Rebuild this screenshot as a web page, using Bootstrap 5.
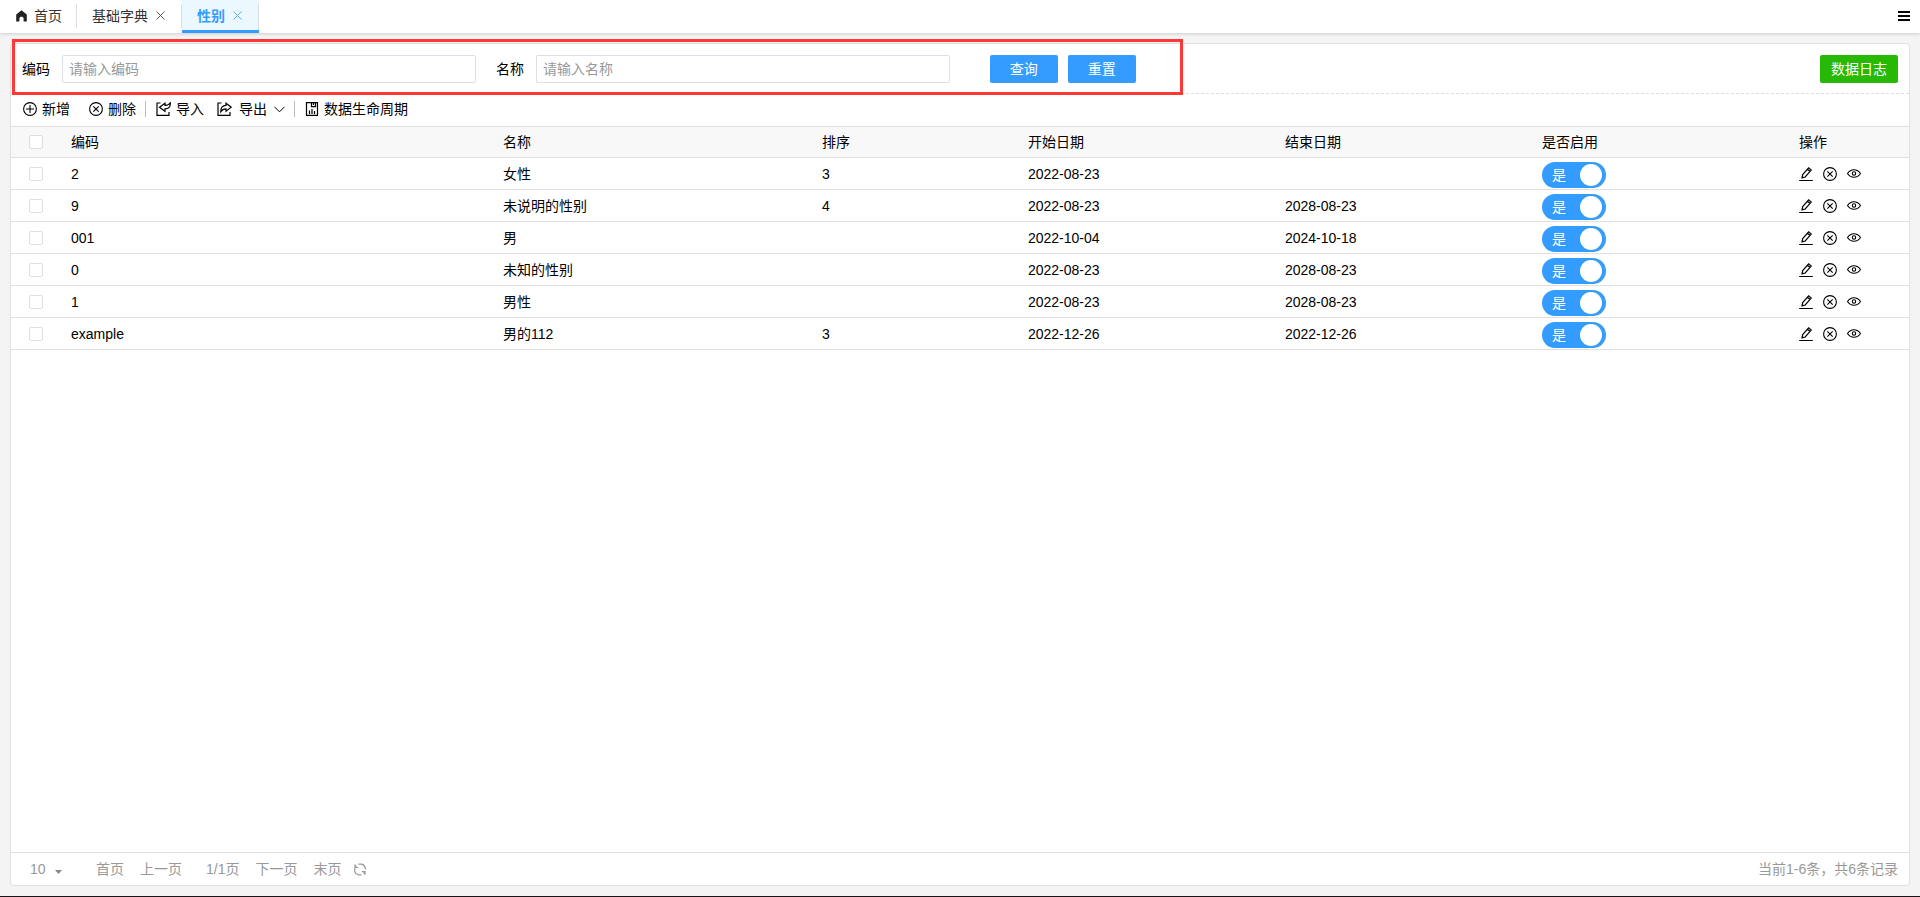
<!DOCTYPE html>
<html lang="zh-CN">
<head>
<meta charset="utf-8">
<meta name="viewport" content="width=device-width, initial-scale=1">
<title>性别</title>
<link href="https://cdn.jsdelivr.net/npm/bootstrap@5.3.0/dist/css/bootstrap.min.css" rel="stylesheet">
<style>
  :root { --line: #e0e0e0; --blue: #349cff; }
  body { font: 14px/20px "Liberation Sans", "Noto Sans CJK SC", sans-serif; color: #000; background: #f4f4f4; border-bottom: 1px solid #181418; }
  svg { flex: none; fill: none; stroke: currentColor; }
  a { color: inherit; text-decoration: none; }
  .tabbar { height: 33px; background: #fff; box-shadow: 0 1px 3px rgba(0,0,0,.16); }
  .tabbar .nav-link { height: 33px; padding: 0 15px 2px; color: #333; display: flex; align-items: center; position: relative; }
  .tabbar .nav-link::after { content: ""; position: absolute; right: 0; top: 4px; width: 1px; height: 24px; background: #ddd; }
  .tabbar .nav-link.active { color: var(--blue); font-weight: 700; background: #ecf8ff; box-shadow: inset 0 -3px var(--blue); }
  .tabbar .nav-link.active::after { height: 26px; }
  .home-icon { margin-right: 7px; }
  .tab-close { border: 0; background: none; padding: 0; color: inherit; display: flex; margin: 0 2px 0 8px; opacity: .8; }
  .menu-btn { border: 0; background: none; padding: 0; margin: 11px 10px 0 0; color: #000; display: flex; }
  .panel { margin: 10px 10px; border: 1px solid var(--line); border-radius: 4px; background: #fff; }
  .filters { height: 50px; border-bottom: 1px dashed #ddd; padding-right: 11px; }
  .search { width: 62.1%; height: 100%; padding: 0 47px 0 11px; }
  .search-frame { position: absolute; inset: -5px 0 -2px 1px; border: 3px solid #ff3737; pointer-events: none; z-index: 2; }
  .search .form-control { height: 28px; padding: 0 6px; border: 1px solid #dcdfe6; border-radius: 2px; font-size: 14px; line-height: 20px; flex: 1 1 0; min-width: 0; margin-left: 12px; }
  .search .form-control::placeholder { color: #999; opacity: 1; }
  .query-actions { gap: 10px; }
  .act { height: 28px; padding: 0; width: 68px; border: 0; border-radius: 2px; font-size: 14px; line-height: 20px; color: #fff; background: var(--blue); }
  .act-log { width: 78px; background: #28b905; }
  .tools { height: 32px; padding: 0 12px 2px; }
  .tools button { border: 0; background: none; padding: 0; margin-right: 19px; color: #000; display: flex; align-items: center; gap: 5px; }
  .tools .before-rule { margin-right: 9px; }
  .tools .before-split { margin-right: 13px; }
  .tools .more { gap: 7px; }
  .tools .rule { width: 1px; height: 16px; margin-right: 10px; background: #bbb; }
  .grid-table { table-layout: fixed; margin: 0; color: #000; border-top: 1px solid var(--line); }
  .grid-table > :not(caption) > * > * { padding: 0 10px; height: 32px; border-bottom: 1px solid var(--line); font-weight: 400; vertical-align: middle; color: #000; }
  .grid-table > thead > tr > th { height: 31px; background: #f8f8f8; }
  .grid-table .form-check-input { float: none; display: block; margin: 0 0 0 8px; width: 14px; height: 14px; border: 1px solid #dcdfe6; border-radius: 2px; }
  .grid-table .toggle { display: grid; width: 64px; height: 26px; margin-top: 2px; }
  .grid-table .toggle > * { grid-area: 1 / 1; }
  .grid-table .toggle .form-check-input { width: 64px; height: 26px; margin: 0; padding: 2px 4px; border: 0; border-radius: 13px; background: #bbb; display: flex; }
  .grid-table .toggle .form-check-input:checked { background: var(--blue); justify-content: flex-end; }
  .toggle .form-check-input::before { content: ""; width: 22px; height: 22px; border-radius: 50%; background: #fff; }
  .toggle span { color: #fff; padding: 3px 0 0 10px; z-index: 1; pointer-events: none; }
  .ops { display: flex; gap: 10px; }
  .ops button { border: 0; padding: 0; background: none; color: #000; display: flex; }
  .pager { height: 33px; border-top: 1px solid var(--line); padding: 0 11px 0 19px; color: #999; }
  .pager select { appearance: none; border: 0; color: inherit; width: 34px; padding: 0; background: url("data:image/svg+xml,%3Csvg xmlns='http://www.w3.org/2000/svg' viewBox='0 0 7 4'%3E%3Cpath d='M0 0h7L3.500 4z' fill='%23888'/%3E%3C/svg%3E") right 2px top 11px / 7px 4px no-repeat; }
</style>
</head>
<body class="d-flex flex-column min-vh-100">
<svg class="d-none">
  <symbol id="i-x" viewBox="0 0 9 9"><path d="M.5.5l8 8M8.500.5l-8 8"/></symbol>
  <symbol id="i-del" viewBox="0 0 14 14"><circle cx="7" cy="7" r="6.400" stroke-width="1.100"/><path d="M4.300 4.300l5.400 5.400M9.700 4.300l-5.400 5.400" stroke-width="1.100"/></symbol>
  <symbol id="i-edit" viewBox="0 0 14 14"><path d="M.2 13.500h13.600"/><path d="M3 10.900l.7-3.300L9.600.9l2.600 2.200-6 6.900zM8.400 2.300L11 4.500" stroke-width="1.200"/></symbol>
  <symbol id="i-eye" viewBox="0 0 14 14"><path d="M.5 6.500C3.800 1.500 10.200 1.500 13.500 6.500 10.200 11.500 3.800 11.500.5 6.500z" stroke-width="1.100"/><circle cx="7" cy="6.500" r="1.700" stroke-width="1.100"/></symbol>
</svg>

<nav class="tabbar d-flex align-items-start justify-content-between">
  <ul class="nav flex-nowrap">
    <li><a class="nav-link" href="#"><svg class="home-icon" width="12" height="12" viewBox="0 0 12 12"><path d="M6.500.3L1.200 4.500v7.100h3.200V8.500c0-2.500 4.200-2.500 4.200 0v3.100h3.200V4.500z" fill="#222" stroke="none"/></svg>首页</a></li>
    <li><a class="nav-link" href="#">基础字典<button class="tab-close" aria-label="关闭"><svg width="9" height="9"><use href="#i-x"/></svg></button></a></li>
    <li><a class="nav-link active" href="#">性别<button class="tab-close" aria-label="关闭"><svg width="9" height="9"><use href="#i-x"/></svg></button></a></li>
  </ul>
  <button class="menu-btn" aria-label="菜单"><svg width="12" height="10" viewBox="0 0 12 10" stroke-width="2"><path d="M0 1h12M0 5h12M0 9h12"/></svg></button>
</nav>

<main class="panel flex-grow-1 d-flex flex-column">
  <div class="filters d-flex align-items-center justify-content-between">
    <form class="search position-relative d-flex align-items-center">
      <label for="code">编码</label>
      <input class="form-control" id="code" type="text" placeholder="请输入编码">
      <label for="name" class="ms-3 ps-1">名称</label>
      <input class="form-control" id="name" type="text" placeholder="请输入名称">
      <div class="query-actions d-flex ms-3 ps-4">
        <button class="btn act" type="button">查询</button>
        <button class="btn act" type="reset">重置</button>
      </div>
      <div class="search-frame"></div>
    </form>
    <button class="btn act act-log" type="button">数据日志</button>
  </div>

  <div class="tools d-flex align-items-center">
    <button type="button"><svg width="14" height="14" viewBox="0 0 14 14" stroke-width="1.100"><circle cx="7" cy="7" r="6.400"/><path d="M3 7h8M7 3v8"/></svg>新增</button>
    <button type="button" class="before-rule"><svg width="14" height="14"><use href="#i-del"/></svg>删除</button>
    <span class="rule"></span>
    <button type="button" class="before-split"><svg width="15" height="14" viewBox="0 0 15 14" stroke-width="1.200"><path d="M4.500 1H1v12.300h12V10M14.300.8c.2 4-1.600 6-5.300 6v2.500L3.500 5.200 9 1.200v2.100c2.600.1 4.200-.6 5.300-2.500z"/></svg>导入</button>
    <button type="button" class="more before-rule"><svg width="15" height="14" viewBox="0 0 15 14" stroke-width="1.200"><path d="M4.500 1H1v12.300h12V10M3.800 9.800c-.2-4 1.600-6.300 5.200-6.400V1.200l5.200 4-5.200 4V6.900C6.500 6.900 4.900 7.900 3.800 9.800z"/></svg>导出<svg width="11" height="7" viewBox="0 0 11 7" stroke="#777"><path d="M.5.8l5 5 5-5"/></svg></button>
    <span class="rule"></span>
    <button type="button"><svg width="14" height="14" viewBox="0 0 14 14" stroke-width="1.200"><path d="M1.500.6h11v12.800h-11zM6.500.6v4h4v-4M8.500 1v2M4.500 8.500V12M7 7v5M9.500 9v3"/></svg>数据生命周期</button>
  </div>

  <table class="table grid-table">
    <colgroup><col style="width:50px"><col style="width:22.76%"><col style="width:16.81%"><col style="width:10.85%"><col style="width:13.54%"><col style="width:13.54%"><col style="width:13.54%"><col></colgroup>
    <thead><tr><th><input class="form-check-input" type="checkbox" aria-label="全选"></th><th>编码</th><th>名称</th><th>排序</th><th>开始日期</th><th>结束日期</th><th>是否启用</th><th>操作</th></tr></thead>
    <tbody id="rows"></tbody>
  </table>

  <footer class="pager d-flex align-items-center mt-auto">
    <select aria-label="每页条数"><option>10</option></select>
    <div class="d-flex gap-3 ms-3 ps-3">
      <a href="#">首页</a><a href="#">上一页</a><span class="ps-2">1/1页</span><a href="#">下一页</a><a href="#">末页</a>
    </div>
    <a href="#" class="d-flex ms-2 ps-1" aria-label="刷新"><svg width="14" height="13" viewBox="0 0 14 13" stroke-width="1.200"><path d="M1.700 8.500V6.500A5.300 5.300 0 0 1 3.500 2.600M5.500 1.200H8.500A5 5 0 0 1 12.300 5V6.500M12.300 8.500A5 5 0 0 1 10.500 10.500M8.500 11.900H5.500A5 5 0 0 1 1.700 8.500M2 1.300v3.200h3.300M12 11.800V8.600H8.700"/></svg></a>
    <span class="ms-auto">当前1-6条，共6条记录</span>
  </footer>
</main>

<script src="https://cdn.jsdelivr.net/npm/bootstrap@5.3.0/dist/js/bootstrap.bundle.min.js"></script>
<script>
  const data = [
    ['2', '女性', '3', '2022-08-23', ''],
    ['9', '未说明的性别', '4', '2022-08-23', '2028-08-23'],
    ['001', '男', '', '2022-10-04', '2024-10-18'],
    ['0', '未知的性别', '', '2022-08-23', '2028-08-23'],
    ['1', '男性', '', '2022-08-23', '2028-08-23'],
    ['example', '男的112', '3', '2022-12-26', '2022-12-26']
  ];
  const op = (id, name) => `<button type="button" aria-label="${name}"><svg width="14" height="14"><use href="#${id}"/></svg></button>`;
  document.getElementById('rows').innerHTML = data.map(r => `<tr>
    <td><input class="form-check-input" type="checkbox" aria-label="选择"></td>
    ${r.map(v => `<td>${v}</td>`).join('')}
    <td><label class="toggle"><input class="form-check-input" type="checkbox" role="switch" checked><span>是</span></label></td>
    <td><div class="ops">${op('i-edit', '编辑')}${op('i-del', '删除')}${op('i-eye', '查看')}</div></td></tr>`).join('');
</script>
</body>
</html>
